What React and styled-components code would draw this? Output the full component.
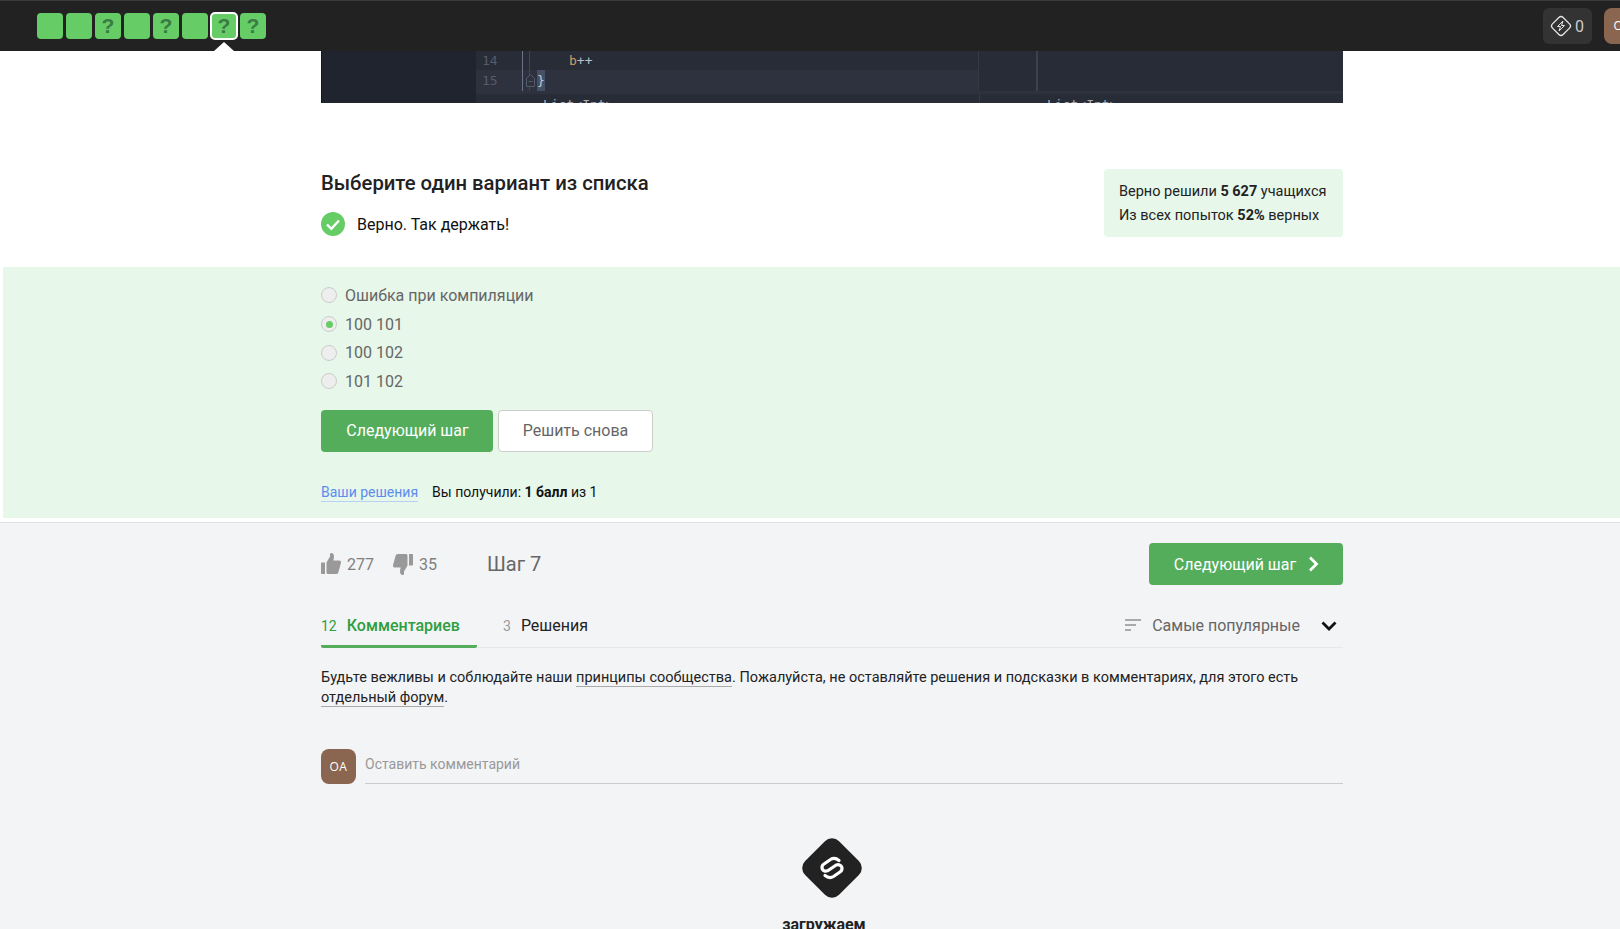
import React from "react";
import styled, { createGlobalStyle } from "styled-components";

const Global = createGlobalStyle`
  html, body {
    margin: 0;
    height: 100%;
    overflow: hidden;
    background: #fff;
  }
  body {
    font-family: Roboto, "Liberation Sans", sans-serif;
    color: #222;
  }
`;

const Page = styled.div`
  height: 929px;
  overflow: hidden;
  display: flex;
  flex-direction: column;
`;

const TopBar = styled.header`
  flex: none;
  height: 51px;
  box-sizing: border-box;
  border-top: 1px solid #3a3a3a;
  background: #222;
  display: flex;
  align-items: flex-start;
  justify-content: space-between;
  padding: 7px 0 0 37px;
`;

const Steps = styled.div`
  display: flex;
  gap: 3px;
  padding-top: 5px;
`;

const Step = styled.div`
  position: relative;
  width: 26px;
  height: 26px;
  box-sizing: border-box;
  border-radius: 4px;
  background: #66cc66;
  color: #3a7a45;
  font: 700 21px/26px "Liberation Sans", sans-serif;
  text-align: center;
  ${(p) =>
    p.$active &&
    `
    outline: 2px solid #fff;
    outline-offset: -1px;
    &::after {
      content: "";
      position: absolute;
      left: 3px;
      top: 29px;
      border-left: 10px solid transparent;
      border-right: 10px solid transparent;
      border-bottom: 9px solid #fff;
    }
  `}
`;

const BarRight = styled.div`
  display: flex;
  gap: 12px;
  margin-right: -20px;
`;

const Energy = styled.div`
  width: 49px;
  height: 36px;
  border-radius: 6px;
  background: #333;
  color: #ccc;
  font-size: 16px;
  display: flex;
  align-items: center;
  justify-content: center;
  gap: 3px;
  padding-right: 1px;
  box-sizing: border-box;
`;

const BarAvatar = styled.div`
  width: 36px;
  height: 36px;
  border-radius: 8px;
  background: #8a6651;
  color: #fff;
  font: 12px/36px "Open Sans", sans-serif;
  text-align: center;
`;

const Column = styled.div`
  width: 1022px;
  margin-left: 321px;
`;

const CodeShot = styled.div`
  width: 1022px;
  margin-left: 321px;
  height: 52px;
  flex: none;
  display: flex;
  background: #20242e;
  overflow: hidden;
  border-left: 1px solid #14161c;
  box-sizing: border-box;
`;

const CodeSide = styled.div`
  width: 154px;
  flex: none;
`;

const CodePane = styled.div`
  flex: 1;
  background: #282c37;
  font-family: "DejaVu Sans Mono", monospace;
  font-size: 13px;
  display: flex;
  flex-direction: column;
`;

const CodeRows = styled.div`
  display: flex;
  height: 40px;
`;

const LeftCode = styled.div`
  width: 502px;
  flex: none;
  border-right: 1px solid #343945;
`;

const RightCode = styled.div`
  flex: 1;
  padding-left: 57px;
`;

const RightRule = styled.div`
  width: 2px;
  height: 40px;
  background: #3c414d;
`;

const CodeLine = styled.div`
  height: ${(p) => p.$h}px;
  line-height: ${(p) => p.$h}px;
  display: flex;
  background: ${(p) => (p.$current ? "#2e323e" : "transparent")};
  color: #555b69;
`;

const LineNo = styled.span`
  width: 47px;
  padding-left: 6px;
  box-sizing: border-box;
  border-right: 1px solid #6a7488;
`;

const FoldCol = styled.span`
  width: 14px;
  flex: none;
  display: flex;
  align-items: center;
  justify-content: center;
  background: linear-gradient(#3f4552, #3f4552) 6px 0 / 1px 100% no-repeat;
`;

const CodeText = styled.span`
  padding-left: ${(p) => p.$indent}px;
  color: #b8c0cc;
  i {
    font-style: normal;
    color: #d19a66;
  }
`;

const Brace = styled.span`
  background: #465064;
  color: #c2cad6;
  width: 8px;
`;

const CodeFoot = styled.div`
  height: 12px;
  box-sizing: border-box;
  border-top: 3px solid #2e323e;
  color: #aab2bf;
  font-size: 13px;
  line-height: 14px;
  display: flex;
  overflow: hidden;
`;

const FootCell = styled.div`
  width: ${(p) => p.$w}px;
  height: 9px;
  flex: none;
  padding: 4px 0 0 67px;
  box-sizing: border-box;
  white-space: nowrap;
  overflow: hidden;
  & + & {
    border-left: 1px solid #343945;
  }
`;

const TaskHead = styled.div`
  display: flex;
  justify-content: space-between;
  align-items: flex-start;
  padding-top: 66px;
  height: 164px;
  box-sizing: border-box;
`;

const TaskTitle = styled.h2`
  margin: 0;
  font-size: 20.3px;
  font-weight: 500;
  line-height: 28px;
  color: #222;
`;

const Verdict = styled.div`
  display: flex;
  align-items: center;
  gap: 12px;
  margin-top: 15px;
  font-size: 16px;
  color: #111;
`;

const Stats = styled.div`
  width: 239px;
  height: 68px;
  box-sizing: border-box;
  background: #e7f7ea;
  border-radius: 4px;
  padding: 11px 15px;
  font-size: 14.5px;
  line-height: 24px;
  color: #222;
  white-space: nowrap;
  b {
    font-weight: 700;
  }
`;

const GreenBand = styled.section`
  margin-left: 3px;
  height: 251px;
  box-sizing: border-box;
  background: #e7f7ea;
  padding: 14px 0 0 318px;
  flex: none;
`;

const Option = styled.div`
  height: 28.7px;
  display: flex;
  align-items: center;
  gap: 8px;
  font-size: 16px;
  color: #666;
`;

const Radio = styled.span`
  width: 16px;
  height: 16px;
  box-sizing: border-box;
  border-radius: 50%;
  border: 1px solid #ccc;
  background: #eee;
  display: flex;
  align-items: center;
  justify-content: center;
  &::after {
    content: "";
    display: ${(p) => (p.$on ? "block" : "none")};
    width: 7px;
    height: 7px;
    border-radius: 50%;
    background: #66cc66;
  }
`;

const Buttons = styled.div`
  display: flex;
  gap: 5px;
  margin-top: 14px;
`;

const GreenButton = styled.div`
  height: 42px;
  width: ${(p) => p.$w}px;
  box-sizing: border-box;
  background: #54ad5a;
  border-radius: 4px;
  color: #fff;
  font-size: 16px;
  display: flex;
  align-items: center;
  justify-content: center;
  gap: 12px;
  padding-left: 1px;
`;

const PlainButton = styled.div`
  height: 42px;
  width: 155px;
  box-sizing: border-box;
  background: #fff;
  border: 1px solid #ccc;
  border-radius: 4px;
  color: #666;
  font-size: 16px;
  display: flex;
  align-items: center;
  justify-content: center;
`;

const ScoreRow = styled.div`
  display: flex;
  gap: 14px;
  margin-top: 31px;
  font-size: 14px;
  line-height: 18px;
  color: #111;
  b {
    font-weight: 700;
  }
`;

const BlueLink = styled.span`
  color: #5b8def;
  border-bottom: 1px solid #b9d0f5;
`;

const Lower = styled.div`
  flex: 1;
  margin-top: 4px;
  background: #f3f4f6;
  border-top: 1px solid #dfe0e3;
`;

const StepRow = styled.div`
  display: flex;
  align-items: center;
  height: 42px;
  margin-top: 20px;
`;

const Vote = styled.div`
  display: flex;
  align-items: center;
  gap: 6px;
  font-size: 16px;
  color: #808080;
  margin-right: 19px;
`;

const StepLabel = styled.div`
  font-size: 20px;
  color: #666;
  margin-left: 31px;
  flex: 1;
`;

const TabsRow = styled.div`
  display: flex;
  align-items: flex-end;
  height: 62px;
  border-bottom: 1px solid #e6e7ea;
`;

const Tab = styled.div`
  height: 42px;
  width: ${(p) => p.$w}px;
  box-sizing: border-box;
  margin-bottom: -1px;
  display: flex;
  align-items: center;
  gap: 10px;
  font-size: 16px;
  color: ${(p) => (p.$active ? "#2e9e3f" : "#222")};
  font-weight: ${(p) => (p.$active ? 500 : 400)};
  border-bottom: 3px solid ${(p) => (p.$active ? "#54ad5a" : "transparent")};
  border-radius: 0 0 2px 2px;
  & + & {
    margin-left: 26px;
  }
`;

const TabCount = styled.span`
  font-size: 14px;
  font-weight: 400;
  color: ${(p) => (p.$active ? "#2e9e3f" : "#999")};
`;

const Sorter = styled.div`
  margin-left: auto;
  height: 42px;
  padding-bottom: 2px;
  box-sizing: border-box;
  display: flex;
  align-items: center;
  font-size: 16px;
  color: #666;
  gap: 12px;
  padding-right: 6px;
`;

const SortIcon = styled.svg`
  margin-right: -1px;
`;

const SortChevron = styled.svg`
  margin-left: 9px;
  margin-top: 1px;
`;

const Rules = styled.p`
  margin: 20px 0 0;
  font-size: 14.5px;
  line-height: 20px;
  color: #222;
  span {
    border-bottom: 1px solid #aaa;
  }
`;

const CommentRow = styled.div`
  display: flex;
  gap: 9px;
  margin-top: 41px;
`;

const Avatar = styled.div`
  width: 35px;
  height: 35px;
  flex: none;
  border-radius: 8px;
  background: #8a6651;
  color: #fff;
  font: 12px/36px "Open Sans", sans-serif;
  letter-spacing: 0.5px;
  text-align: center;
`;

const CommentInput = styled.div`
  flex: 1;
  height: 35px;
  box-sizing: border-box;
  border-bottom: 1px solid #ccc;
  color: #999;
  font-size: 14px;
  line-height: 30px;
`;

const Loader = styled.div`
  margin-top: 54px;
  display: flex;
  flex-direction: column;
  align-items: center;
  gap: 17px;
  font-size: 16px;
  font-weight: 700;
  color: #222;
`;

const LoaderText = styled.div`
  margin-right: 16px;
`;

const DownFlip = styled.span`
  display: flex;
  transform: rotate(180deg);
`;

function Thumb() {
  return (
    <svg width="20" height="22" viewBox="0 0 20 22">
      <path fill="#999" d="M0 10.500c0-.6.4-1 1-1h3v11.500H1c-.6 0-1-.4-1-1zM5.500 9.500 9 3.500V1.300C9 .6 9.500 0 10.400 0c1.600 0 2.600 1.400 2.600 3.200 0 1.400-.3 3-.7 4.300h6c1 0 1.700.8 1.700 1.800 0 .4-.1.8-.2 1.200l-2.400 8.700c-.3 1.100-1.100 1.800-2.200 1.800H7c-.8 0-1.500-.7-1.500-1.500z" />
    </svg>
  );
}

function Logo() {
  return (
    <svg width="60" height="60" viewBox="0 0 60 60">
      <rect x="6" y="6" width="48" height="48" rx="10" fill="#222" transform="rotate(45 30 30)" />
      <path
        d="M37 22.500C34.500 20.500 31 20 28.500 21.500L22 26C19 28 19.500 32 22.500 33C24.500 33.700 26 32.800 28 31.300L32 28.500C34 27 36 26.300 37.500 27C40.500 28 41 32 38 34L31.500 38.500C29 40 25.500 39.500 23 37.500"
        fill="none"
        stroke="#fff"
        strokeWidth="3.200"
        strokeLinecap="round"
      />
    </svg>
  );
}

export default function App() {
  const steps = [false, false, true, false, true, false, true, true];
  return (
    <Page>
      <Global />
      <TopBar>
        <Steps>
          {steps.map((q, i) => (
            <Step key={i} $active={i === 6}>{q ? "?" : ""}</Step>
          ))}
        </Steps>
        <BarRight>
          <Energy>
            <svg width="22" height="22" viewBox="0 0 22 22" fill="none" stroke="#e6e6e6">
              <rect x="3.500" y="3.500" width="15" height="15" rx="3" transform="rotate(45 11 11)" strokeWidth="1.300" />
              <path d="M13 6 7.500 11.500h3L9 16l5.500-5.500h-3z" strokeWidth="1" />
            </svg>
            0
          </Energy>
          <BarAvatar>OA</BarAvatar>
        </BarRight>
      </TopBar>

      <CodeShot>
        <CodeSide />
        <CodePane>
          <CodeRows>
            <LeftCode>
              <CodeLine $h={19}>
                <LineNo>14</LineNo>
                <FoldCol />
                <CodeText $indent={32}><i>b</i>++</CodeText>
              </CodeLine>
              <CodeLine $current $h={21}>
                <LineNo>15</LineNo>
                <FoldCol>
                  <svg width="9" height="13" viewBox="0 0 9 13" fill="#2e323e" stroke="#555b69">
                    <path d="M.5 4.500 4.500.5l4 4v8h-8z" />
                    <path d="M2.500 7.500h4" />
                  </svg>
                </FoldCol>
                <Brace>{"}"}</Brace>
              </CodeLine>
            </LeftCode>
            <RightCode><RightRule /></RightCode>
          </CodeRows>
          <CodeFoot>
            <FootCell $w={503}>List&lt;Int&gt;</FootCell>
            <FootCell $w={300}>List&lt;Int&gt;</FootCell>
          </CodeFoot>
        </CodePane>
      </CodeShot>

      <Column>
        <TaskHead>
          <div>
            <TaskTitle>Выберите один вариант из списка</TaskTitle>
            <Verdict>
              <svg width="24" height="24" viewBox="0 0 24 24">
                <circle cx="12" cy="12" r="12" fill="#66cc66" />
                <path d="m6 12.500 4.300 4.300L18 8.500" fill="none" stroke="#fff" strokeWidth="2.400" />
              </svg>
              Верно. Так держать!
            </Verdict>
          </div>
          <Stats>
            Верно решили <b>5 627</b> учащихся<br />
            Из всех попыток <b>52%</b> верных
          </Stats>
        </TaskHead>
      </Column>

      <GreenBand>
        <Option><Radio />Ошибка при компиляции</Option>
        <Option><Radio $on />100 101</Option>
        <Option><Radio />100 102</Option>
        <Option><Radio />101 102</Option>
        <Buttons>
          <GreenButton $w={172}>Следующий шаг</GreenButton>
          <PlainButton>Решить снова</PlainButton>
        </Buttons>
        <ScoreRow>
          <BlueLink>Ваши решения</BlueLink>
          <span>Вы получили: <b>1 балл</b> из 1</span>
        </ScoreRow>
      </GreenBand>

      <Lower>
        <Column>
          <StepRow>
            <Vote><Thumb />277</Vote>
            <Vote><DownFlip><Thumb /></DownFlip>35</Vote>
            <StepLabel>Шаг 7</StepLabel>
            <GreenButton $w={194}>
              Следующий шаг
              <svg width="11" height="16" viewBox="0 0 11 16" fill="none" stroke="#fff" strokeWidth="2.800">
                <path d="m2 1.500 6.500 6.500L2 14.500" />
              </svg>
            </GreenButton>
          </StepRow>
          <TabsRow>
            <Tab $active $w={156}><TabCount $active>12</TabCount>Комментариев</Tab>
            <Tab $w={120}><TabCount>3</TabCount>Решения</Tab>
            <Sorter>
              <SortIcon width="16" height="12" viewBox="0 0 16 12" fill="#aaa">
                <rect width="16" height="2" />
                <rect y="5" width="11" height="2" />
                <rect y="10" width="6" height="2" />
              </SortIcon>
              Самые популярные
              <SortChevron width="16" height="10" viewBox="0 0 16 10" fill="none" stroke="#111" strokeWidth="2.800">
                <path d="m1.500 1.500 6.500 6.500 6.500-6.500" />
              </SortChevron>
            </Sorter>
          </TabsRow>
          <Rules>
            Будьте вежливы и соблюдайте наши <span>принципы сообщества</span>. Пожалуйста, не оставляйте решения и подсказки в комментариях, для этого есть <span>отдельный форум</span>.
          </Rules>
          <CommentRow>
            <Avatar>OA</Avatar>
            <CommentInput>Оставить комментарий</CommentInput>
          </CommentRow>
          <Loader>
            <Logo />
            <LoaderText>загружаем</LoaderText>
          </Loader>
        </Column>
      </Lower>
    </Page>
  );
}
